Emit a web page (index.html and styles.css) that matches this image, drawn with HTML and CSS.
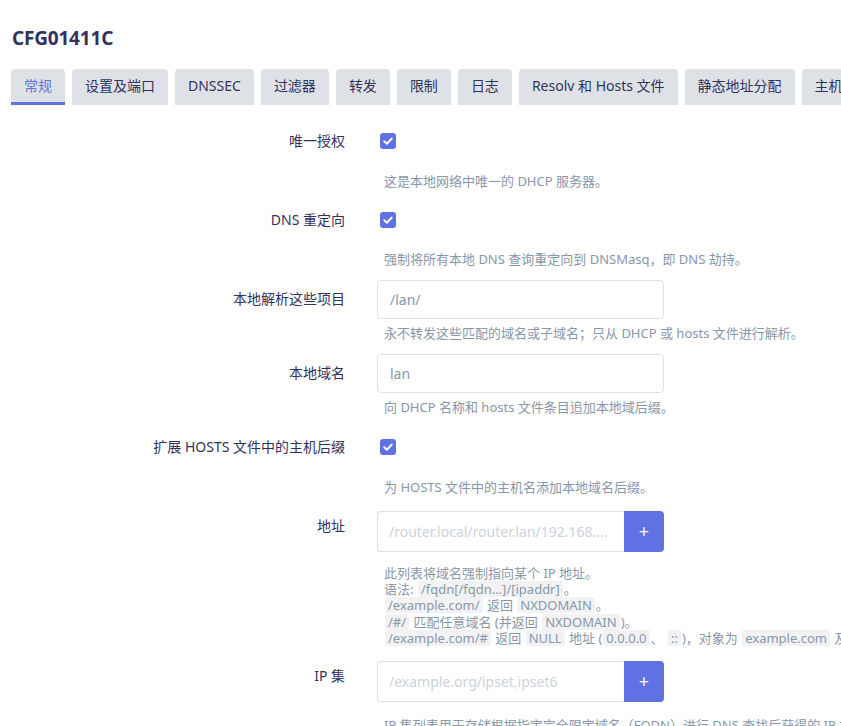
FILE: index.html
```html
<!DOCTYPE html>
<html lang="zh-CN">
<head>
<meta charset="utf-8">
<title>CFG01411C</title>
<link rel="stylesheet" href="styles.css">
</head>
<body>
<h2 class="title">CFG01411C</h2>
<ul class="tabs">
  <li class="tab active">常规</li>
  <li class="tab">设置及端口</li>
  <li class="tab">DNSSEC</li>
  <li class="tab">过滤器</li>
  <li class="tab">转发</li>
  <li class="tab">限制</li>
  <li class="tab">日志</li>
  <li class="tab">Resolv 和 Hosts 文件</li>
  <li class="tab">静态地址分配</li>
  <li class="tab">主机名</li>
  <li class="tab">IP 集</li>
</ul>

<div class="form">
  <div class="row r1">
    <div class="lbl">唯一授权</div>
    <div class="field">
      <div class="ctl"><span class="cb"><svg viewBox="0 0 16 16" width="16" height="16"><path d="M4.3 8.3 L6.9 10.8 L11.7 5.6" fill="none" stroke="#fff" stroke-width="2" stroke-linecap="round" stroke-linejoin="round"/></svg></span></div>
      <div class="desc d-cb">这是本地网络中唯一的 DHCP 服务器。</div>
    </div>
  </div>

  <div class="row r2">
    <div class="lbl">DNS 重定向</div>
    <div class="field">
      <div class="ctl"><span class="cb"><svg viewBox="0 0 16 16" width="16" height="16"><path d="M4.3 8.3 L6.9 10.8 L11.7 5.6" fill="none" stroke="#fff" stroke-width="2" stroke-linecap="round" stroke-linejoin="round"/></svg></span></div>
      <div class="desc d-cb2">强制将所有本地 DNS 查询重定向到 DNSMasq，即 DNS 劫持。</div>
    </div>
  </div>

  <div class="row r3">
    <div class="lbl">本地解析这些项目</div>
    <div class="field">
      <div class="ctl"><input class="txt" type="text" value="/lan/"></div>
      <div class="desc d-in">永不转发这些匹配的域名或子域名；只从 DHCP 或 hosts 文件进行解析。</div>
    </div>
  </div>

  <div class="row r4">
    <div class="lbl">本地域名</div>
    <div class="field">
      <div class="ctl"><input class="txt" type="text" value="lan"></div>
      <div class="desc d-in">向 DHCP 名称和 hosts 文件条目追加本地域后缀。</div>
    </div>
  </div>

  <div class="row r5">
    <div class="lbl">扩展 HOSTS 文件中的主机后缀</div>
    <div class="field">
      <div class="ctl"><span class="cb"><svg viewBox="0 0 16 16" width="16" height="16"><path d="M4.3 8.3 L6.9 10.8 L11.7 5.6" fill="none" stroke="#fff" stroke-width="2" stroke-linecap="round" stroke-linejoin="round"/></svg></span></div>
      <div class="desc d-cb">为 HOSTS 文件中的主机名添加本地域名后缀。</div>
    </div>
  </div>

  <div class="row r6">
    <div class="lbl lbl-top">地址</div>
    <div class="field">
      <div class="dyn">
        <input class="dyn-in" type="text" placeholder="/router.local/router.lan/192.168....">
        <span class="add">+</span>
      </div>
      <div class="desc multi">
        <div>此列表将域名强制指向某个 IP 地址。</div>
        <div>语法: <code>/fqdn[/fqdn…]/[ipaddr]</code>。</div>
        <div><code>/example.com/</code> 返回 <code>NXDOMAIN</code>。</div>
        <div><code>/#/</code> 匹配任意域名 (并返回 <code>NXDOMAIN</code>)。</div>
        <div><code>/example.com/#</code> 返回 <code>NULL</code> 地址 (<code>0.0.0.0</code>、 <code>::</code>)，对象为 <code>example.com</code> 及其子域名。</div>
      </div>
    </div>
  </div>

  <div class="row r7">
    <div class="lbl lbl-top">IP 集</div>
    <div class="field">
      <div class="dyn">
        <input class="dyn-in" type="text" placeholder="/example.org/ipset,ipset6">
        <span class="add">+</span>
      </div>
      <div class="desc multi">
        <div>IP 集列表用于存储根据指定完全限定域名（FQDN）进行 DNS 查找后获得的 IP 地址。</div>
      </div>
    </div>
  </div>
</div>
</body>
</html>
```
FILE: styles.css
```css
html, body {
  margin: 0;
  padding: 0;
  overflow: hidden;
  background: #fff;
  font-family: "Noto Sans", "Noto Sans CJK SC", sans-serif;
  color: #32325d;
}

.title {
  margin: 26px 0 0 12px;
  font-size: 19px;
  line-height: 24px;
  font-weight: 700;
  color: #32325d;
  letter-spacing: -0.2px;
}

.tabs {
  list-style: none;
  margin: 19px 0 0 0;
  padding: 0 0 0 11px;
  display: flex;
  gap: 7px;
  white-space: nowrap;
}

.tab {
  flex: none;
  height: 36px;
  box-sizing: border-box;
  padding: 0 13px;
  line-height: 34px;
  font-size: 14px;
  color: #32325d;
  background: #dee2e6;
  border-radius: 4px 4px 0 0;
  border-bottom: 2px solid transparent;
}

.tab.active {
  color: #5e72e4;
  border-bottom: 3px solid #5e72e4;
  line-height: 33px;
}

.form {
  margin-top: 17px;
}

.row {
  display: flex;
  align-items: flex-start;
}

.lbl {
  width: 345px;
  flex: none;
  text-align: right;
  font-size: 14px;
  line-height: 38px;
  color: #32325d;
  white-space: nowrap;
}

.lbl-top {
  line-height: 20px;
  margin-top: 5px;
}

.field {
  margin-left: 32px;
  flex: none;
}

.ctl {
  height: 38px;
  display: flex;
  align-items: center;
}

.cb {
  width: 16px;
  height: 16px;
  margin-left: 3px;
  border-radius: 3px;
  background: #5e72e4;
  display: block;
}

.cb svg {
  display: block;
}

.txt {
  width: 287px;
  height: 39px;
  box-sizing: border-box;
  border: 1px solid #dee2e6;
  border-radius: 4px;
  padding: 0 12px;
  font-family: inherit;
  font-size: 14px;
  color: #8898aa;
  background: #fff;
  outline: none;
}

.desc {
  font-size: 13px;
  line-height: 20px;
  color: #8898aa;
  padding-left: 7px;
  white-space: nowrap;
}

.d-cb { margin-top: 11px; margin-bottom: 10px; }
.d-cb2 { margin-top: 10px; margin-bottom: 11px; }
.d-in { margin-top: 5px; margin-bottom: 11px; }
.r5 .d-cb { margin-bottom: 14px; }

.dyn {
  display: flex;
  width: 287px;
  height: 41px;
}

.dyn-in {
  flex: 1;
  min-width: 0;
  box-sizing: border-box;
  height: 41px;
  border: 1px solid #dee2e6;
  border-right: none;
  border-radius: 4px 0 0 4px;
  padding: 0 11px;
  font-family: inherit;
  font-size: 14px;
  color: #8898aa;
  outline: none;
  background: #fff;
}

.dyn-in::placeholder {
  color: #cdd2da;
}

.add {
  width: 40px;
  height: 41px;
  flex: none;
  background: #5e72e4;
  color: #fff;
  border-radius: 0 4px 4px 0;
  text-align: center;
  line-height: 40px;
  font-size: 18px;
}

.multi {
  margin-top: 13px;
  line-height: 16.2px;
  margin-bottom: 15px;
}

.multi > div {
  height: 16.2px;
}

.r7 .multi {
  margin-top: 15px;
}

code {
  display: inline-block;
  font-family: inherit;
  font-size: 13px;
  line-height: 16px;
  background: #f2f2f4;
  color: #8898aa;
  padding: 0 3px;
  margin: 0 1px;
  border-radius: 2px;
}
```
